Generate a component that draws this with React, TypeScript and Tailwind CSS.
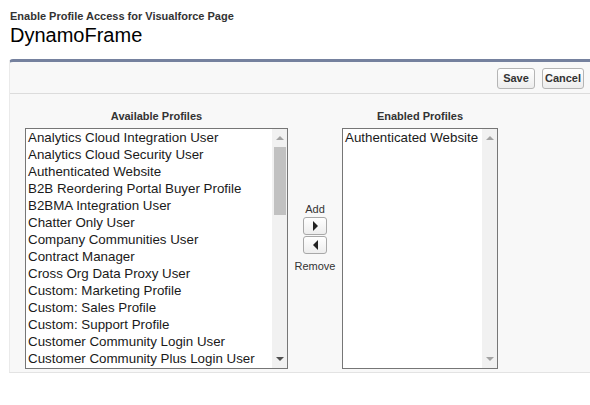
import React from "react";

const availableProfiles = [
  "Analytics Cloud Integration User",
  "Analytics Cloud Security User",
  "Authenticated Website",
  "B2B Reordering Portal Buyer Profile",
  "B2BMA Integration User",
  "Chatter Only User",
  "Company Communities User",
  "Contract Manager",
  "Cross Org Data Proxy User",
  "Custom: Marketing Profile",
  "Custom: Sales Profile",
  "Custom: Support Profile",
  "Customer Community Login User",
  "Customer Community Plus Login User",
];

const enabledProfiles = ["Authenticated Website"];

// fake native scrollbar for the multi-select boxes
const ScrollTrack = ({ thumb }: { thumb: boolean }) => (
  <div className="relative w-[15px] shrink-0 bg-[#f1f1f1]">
    <div className="absolute left-[4px] top-[7px] h-0 w-0 border-x-[4px] border-b-[4px] border-x-transparent border-b-[#a3a3a3]" />
    {thumb && (
      <div className="absolute left-[2px] top-[18px] h-[68px] w-[12px] bg-[#c1c1c1]" />
    )}
    <div
      className={`absolute bottom-[7px] left-[4px] h-0 w-0 border-x-[4px] border-t-[4px] border-x-transparent ${
        thumb ? "border-t-[#505050]" : "border-t-[#a3a3a3]"
      }`}
    />
  </div>
);

const ListBox = ({
  items,
  className,
  thumb,
}: {
  items: string[];
  className: string;
  thumb: boolean;
}) => (
  <div
    className={`flex h-[241px] border border-[#767676] bg-white ${className}`}
  >
    <div className="flex-1 overflow-hidden pl-[2px]">
      {items.map((item) => (
        <div
          key={item}
          className="h-[17px] whitespace-nowrap text-[13.33px] leading-[17px] text-[#1a1a1a]"
        >
          {item}
        </div>
      ))}
    </div>
    <ScrollTrack thumb={thumb} />
  </div>
);

const Btn = ({ children, className = "" }: { children: React.ReactNode; className?: string }) => (
  <button
    className={`h-[21px] rounded-[3px] border border-[#b5b5b5] bg-gradient-to-b from-white to-[#ededed] px-0 text-center text-[11px] font-bold text-[#333] ${className}`}
  >
    {children}
  </button>
);

const ArrowBtn = ({ dir }: { dir: "right" | "left" }) => (
  <button className="mt-[1px] flex h-[18px] w-[24px] items-center justify-center rounded-[3px] border border-[#a8a8a8] bg-gradient-to-b from-white to-[#ededed]">
    {dir === "right" ? (
      <span className="h-0 w-0 border-y-[5px] border-l-[5px] border-y-transparent border-l-[#222]" />
    ) : (
      <span className="h-0 w-0 border-y-[5px] border-r-[5px] border-y-transparent border-r-[#222]" />
    )}
  </button>
);

export default function App() {
  return (
    <div className="h-[405px] w-[590px] overflow-hidden bg-white font-['Liberation_Sans',Arial,sans-serif]">
      <div className="pl-[10px] pt-[10px]">
        <div className="text-[11px] font-bold leading-[13px] text-[#333]">
          Enable Profile Access for Visualforce Page
        </div>
        <div className="text-[20px] leading-[24px] text-black">DynamoFrame</div>
      </div>

      <div className="ml-[9px] mt-[12px] w-[581px] rounded-tl-[4px] border-l border-t-[3px] border-b border-l-[#eaeaea] border-t-[#75819e] border-b-[#e3e3e3] bg-[#f8f8f8]">
        <div className="flex h-[32px] items-center justify-end gap-[7px] border-b border-[#dcdcdc] pr-[6px] pt-[1px]">
          <Btn className="w-[38px]">Save</Btn>
          <Btn className="w-[42px]">Cancel</Btn>
        </div>

        <div className="flex items-start pb-[3px] pl-[15px] pt-[15px]">
          <div className="flex w-[263px] flex-col items-center">
            <div className="mb-[5px] h-[14px] text-[11px] font-bold leading-[14px] text-[#333]">
              Available Profiles
            </div>
            <ListBox items={availableProfiles} className="w-[263px]" thumb />
          </div>

          <div className="flex w-[54px] flex-col items-center pt-[94px]">
            <div className="text-[11px] leading-[13px] text-[#333]">Add</div>
            <ArrowBtn dir="right" />
            <ArrowBtn dir="left" />
            <div className="mt-[6px] text-[11px] leading-[13px] text-[#333]">Remove</div>
          </div>

          <div className="flex w-[156px] flex-col items-center">
            <div className="mb-[5px] h-[14px] text-[11px] font-bold leading-[14px] text-[#333]">
              Enabled Profiles
            </div>
            <ListBox items={enabledProfiles} className="w-[156px]" thumb={false} />
          </div>
        </div>
      </div>
    </div>
  );
}
